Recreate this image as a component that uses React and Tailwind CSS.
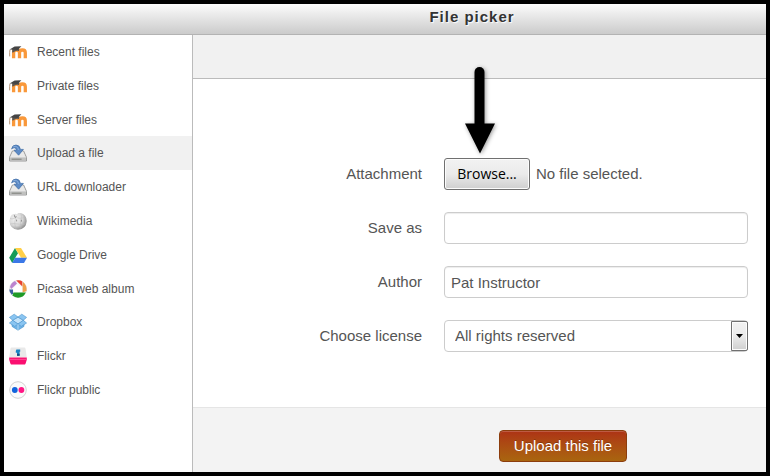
import { useRef, useState } from "react";

function MoodleIcon() {
  return (
    <svg viewBox="0 0 18 18" className="h-[18px] w-[18px]">
      <path d="M4.6 15.2V9.8Q4.6 7 7.5 7T10.5 9.8V15.2M10.5 9.8Q10.5 7 13.4 7T16.3 9.8V15.2" fill="none" stroke="#f9983a" strokeWidth="3.3" />
      <path d="M3.2 6 10.2 5 10 8Q7 7.4 4.6 9.2L3.2 9.4Z" fill="#5a5550" />
      <path d="M0.6 6.6 5.6 3.4 12.4 3.2 8.6 7Z" fill="#454545" />
      <path d="M1 6.6Q0.4 9 0.7 13.4" fill="none" stroke="#b08b6c" strokeWidth="0.9" />
    </svg>
  );
}

function DriveIcon() {
  return (
    <svg viewBox="0 0 18 18" className="h-[18px] w-[18px]">
      <path d="M3.4 7H14.6L17.5 13.4V17H0.5V13.4Z" fill="#dcdddc" stroke="#929392" strokeWidth="0.9" />
      <path d="M4 7.6H14L16.6 13H1.4Z" fill="#e9e9e8" />
      <path d="M1 13.6H17V16.4H1Z" fill="#c0c1bf" />
      <path d="M2.6 15.2H12.6" stroke="#7b7d79" strokeWidth="1" />
      <path d="M2.6 5Q3.2 1 7 1Q11 1.2 11.4 5.4H14.4L9.6 11.2 5 6.2H7.6Q7.2 3.9 5.4 3.8Q3.7 3.8 2.6 5Z" fill="#5d8bc6" stroke="#3e6ba5" strokeWidth="0.7" />
      <path d="M4.2 2.8Q8.4 1 9.6 6" fill="none" stroke="#8fb4de" strokeWidth="0.8" />
    </svg>
  );
}

function WikimediaIcon() {
  return (
    <svg viewBox="0 0 18 18" className="h-[18px] w-[18px]">
      <defs>
        <radialGradient id="globe" cx="35%" cy="35%" r="70%">
          <stop offset="0" stopColor="#f4f4f4" />
          <stop offset="0.6" stopColor="#d6d6d6" />
          <stop offset="1" stopColor="#8c8c8c" />
        </radialGradient>
      </defs>
      <path d="M3.2 2.2 5.2 4 6.5 1.6Q8 3 9 1L11.5.9Q17.5 2.5 17.7 9Q17.2 17.2 9 17.7Q1 17 .4 9Q.4 5 3.2 2.2Z" fill="url(#globe)" />
      <path d="M1 6.4Q3 7.4 5 6.4T9 6 13 6 17.2 6.4M1 12Q5 11 9 12T17 12M6 4Q7 7 6 9T7 17M12 1.4Q13 5 12 8T12 17" fill="none" stroke="#bcbcbc" strokeWidth="0.5" />
      <path d="M5 2.4 6 5.4 7.6 4.6M7.6 7.6V9.4M12.4 7.8V9.6" fill="none" stroke="#8a8a8a" strokeWidth="0.9" />
    </svg>
  );
}

function GoogleDriveIcon() {
  return (
    <svg viewBox="0 0 18 18" className="h-[18px] w-[18px]">
      <path d="M6 2 9 7.2 3.2 17 0.2 11.8Z" fill="#149b57" />
      <path d="M6 2H12L18 11.8H12Z" fill="#ffcf48" />
      <path d="M6.2 11.8H18L15 17H3.2Z" fill="#3b78e7" />
    </svg>
  );
}

function PicasaIcon() {
  return (
    <svg viewBox="0 0 18 18" className="h-[18px] w-[18px]">
      <circle cx="9" cy="9" r="8.5" fill="#f6f6f6" stroke="#cfcfcf" strokeWidth="0.5" />
      <path d="M1 7Q2.2 2.6 6 1L8 3.6 2.2 9Z" fill="#bb84cf" />
      <path d="M7.2.5Q11-.3 13.4 1.5V6.4Z" fill="#e8432f" />
      <path d="M14 2Q18 5 17.6 11L13.6 12.4V5Z" fill="#f0a04a" />
      <path d="M4.4 12.6H16.8Q14.5 17.8 9 17.8Q5.8 17.6 3.4 15.5Z" fill="#1f9a26" />
      <path d="M.3 9.4 4 9.6V13.2L2.8 14.8Q.2 12.2.3 9.4Z" fill="#3c609e" />
      <path d="M8.2 4.4 13 7.2V12H5L4.3 8.4Z" fill="#fff" />
    </svg>
  );
}

function DropboxIcon() {
  return (
    <svg viewBox="0 0 18 18" className="h-[18px] w-[18px]" stroke="#4b94cc" strokeWidth="0.6">
      <path d="M3 8V13.4L9 17.2 15 13.4V8Z" fill="#70b4e7" />
      <path d="M3.4 7.4 9 4.2 14.6 7.4 9 11Z" fill="#c3e3fa" />
      <path d="M5.2 1.2 9 4 3.7 7.3.4 4.4ZM12.8 1.2 9 4 14.3 7.3 17.6 4.4ZM3.7 7.3 9 11 5.7 13.4.4 10ZM14.3 7.3 9 11 12.3 13.4 17.6 10Z" fill="#8ac5f1" />
      <path d="M9 11V17" stroke="#dff1ff" />
    </svg>
  );
}

function FlickrIcon() {
  return (
    <svg viewBox="0 0 18 18" className="h-[18px] w-[18px]">
      <path d="M2.6.6H15.4Q16.4.6 16.6 2L17.8 10.5H.2L1.4 2Q1.6.6 2.6.6Z" fill="#e9e9e9" />
      <path d="M.2 10.4H17.8V12.8L16.6 16.4Q16.2 17.6 15 17.6H3Q1.8 17.6 1.4 16.4L.2 12.8Z" fill="#fa0f70" />
      <path d="M.6 12.4H17.4" stroke="#ff5c9f" strokeWidth="0.8" />
      <path d="M7.4 2.6H11.2V4.8H10.6V8.8H8V5.8H6.8V4Z" fill="#1a83c4" />
      <path d="M8 6.8H10.6V8.8H8Z" fill="#174d80" />
    </svg>
  );
}

function FlickrPublicIcon() {
  return (
    <svg viewBox="0 0 18 18" className="h-[18px] w-[18px]">
      <circle cx="9" cy="9" r="8.3" fill="#fbfbfb" stroke="#d2d2d2" />
      <circle cx="5.8" cy="9" r="2.9" fill="#1264dc" />
      <circle cx="12.4" cy="9" r="2.9" fill="#ff1684" />
    </svg>
  );
}

const repositories = [
  { name: "Recent files", Icon: MoodleIcon },
  { name: "Private files", Icon: MoodleIcon },
  { name: "Server files", Icon: MoodleIcon },
  { name: "Upload a file", Icon: DriveIcon },
  { name: "URL downloader", Icon: DriveIcon },
  { name: "Wikimedia", Icon: WikimediaIcon },
  { name: "Google Drive", Icon: GoogleDriveIcon },
  { name: "Picasa web album", Icon: PicasaIcon },
  { name: "Dropbox", Icon: DropboxIcon },
  { name: "Flickr", Icon: FlickrIcon },
  { name: "Flickr public", Icon: FlickrPublicIcon },
];

function FormRow({ label, htmlFor, children }) {
  return (
    <div className="flex h-8 items-center gap-[22px]">
      <label htmlFor={htmlFor} className="w-[229px] shrink-0 text-right">
        {label}
      </label>
      <div className="relative flex h-8 min-w-0 flex-1 items-center">{children}</div>
    </div>
  );
}

function App() {
  const [active, setActive] = useState("Upload a file");
  const [fileName, setFileName] = useState("");
  const fileInput = useRef(null);

  return (
    <div className="flex min-h-screen flex-col border-4 border-black bg-white font-['Liberation_Sans',Arial,sans-serif] text-[15px] leading-5 text-[#555]">
      {/* Title bar */}
      <header className="flex h-[31px] shrink-0 justify-center border-b border-[#b3b3b3] bg-linear-to-b from-[#fcfcfc] to-[#cbcbcb] pt-[3px] pl-[174px]">
        <h1 className="text-[15px] leading-5 font-bold tracking-[1px] text-[#333] [text-shadow:1px_1px_1px_#fff]">
          File picker
        </h1>
      </header>

      <div className="flex flex-1">
        {/* Repositories */}
        <nav className="w-[189px] shrink-0 border-r border-[#bbb]">
          <ul className="grid h-[372px] auto-rows-fr text-xs">
            {repositories.map(({ name, Icon }) => (
              <li key={name}>
                <a
                  href="#"
                  onClick={() => setActive(name)}
                  className={`flex h-full items-center gap-[10px] pl-[5px] ${
                    active === name ? "bg-[#f1f1f1]" : ""
                  }`}
                >
                  <Icon />
                  <span>{name}</span>
                </a>
              </li>
            ))}
          </ul>
        </nav>

        <main className="flex min-w-0 flex-1 flex-col">
          <div className="h-11 shrink-0 border-b border-[#bbb] bg-[#f1f1f1]"></div>

          <form className="flex flex-1 flex-col" onSubmit={(e) => e.preventDefault()}>
            <div className="flex flex-1 flex-col gap-[22px] pt-[79px] pr-[18px]">
              <FormRow label="Attachment" htmlFor="attachment">
                <input
                  ref={fileInput}
                  id="attachment"
                  type="file"
                  className="hidden"
                  onChange={(e) => setFileName(e.target.files[0]?.name || "")}
                />
                <button
                  type="button"
                  onClick={() => fileInput.current.click()}
                  className="h-8 w-[86px] rounded-[3px] border border-[#707070] bg-linear-to-b from-[#f2f2f2] from-0% via-[#ebebeb] via-50% to-[#cfcfcf] font-['Open_Sans',sans-serif] text-sm text-black shadow-[inset_0_0_0_1px_#fcfcfc]"
                >
                  Browse...
                </button>
                <span className="ml-[6px]">{fileName || "No file selected."}</span>
                {/* Pointer down to the browse button */}
                <svg
                  viewBox="0 0 36 92"
                  className="pointer-events-none absolute bottom-8 left-[18px] h-[92px] w-9 drop-shadow-[1px_1px_2px_#0006]"
                >
                  <path d="M17.5 6V62" stroke="#000" strokeWidth="10" strokeLinecap="round" />
                  <path d="M3 57.5H33L18 87.5Z" />
                </svg>
              </FormRow>

              <FormRow label="Save as" htmlFor="save-as">
                <input
                  id="save-as"
                  type="text"
                  className="h-8 w-full rounded border border-[#ccc] bg-white px-[6px] shadow-[inset_0_1px_1px_#00000013]"
                />
              </FormRow>

              <FormRow label="Author" htmlFor="author">
                <input
                  id="author"
                  type="text"
                  defaultValue="Pat Instructor"
                  className="h-8 w-full rounded border border-[#ccc] bg-white px-[6px] shadow-[inset_0_1px_1px_#00000013]"
                />
              </FormRow>

              <FormRow label="Choose license" htmlFor="license">
                <select
                  id="license"
                  className="h-8 w-full appearance-none rounded border border-[#ccc] bg-white pr-5 pl-[10px]"
                >
                  <option>All rights reserved</option>
                  <option>Public domain</option>
                  <option>Creative Commons</option>
                </select>
                <span className="pointer-events-none absolute top-px right-0 flex h-[30px] w-[17px] items-center justify-center rounded-r-[2px] border border-[#707070] bg-linear-to-b from-[#f2f2f2] via-[#ebebeb] via-50% to-[#cfcfcf] shadow-[inset_0_0_0_1px_#fcfcfc]">
                  <svg viewBox="0 0 7 4" className="h-1 w-[7px]">
                    <path d="M0 0H7L3.5 4Z" />
                  </svg>
                </span>
              </FormRow>
            </div>

            <div className="flex h-[65px] shrink-0 justify-center border-t border-[#e5e5e5] bg-[#f3f3f3] pt-[22px] pl-[167px]">
              <button
                type="submit"
                className="h-8 w-32 rounded border border-[#8c3d0d] bg-linear-to-b from-[#ad3215] to-[#a9650f] text-[15px] text-white shadow-[inset_0_1px_0_#ffffff33] [text-shadow:0_-1px_0_#00000040]"
              >
                Upload this file
              </button>
            </div>
          </form>
        </main>
      </div>
    </div>
  );
}

export default App;
